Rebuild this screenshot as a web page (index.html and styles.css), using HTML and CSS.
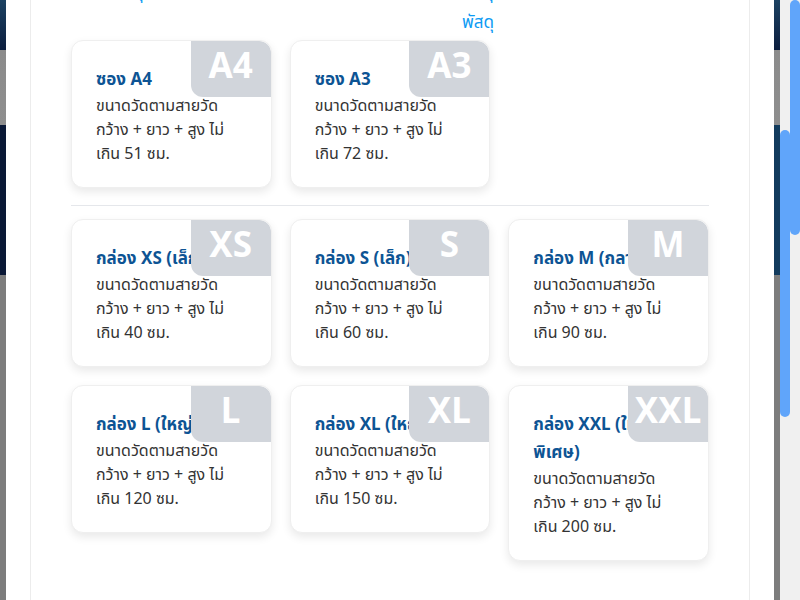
FILE: index.html
```html
<!DOCTYPE html>
<html lang="th">
<head>
<meta charset="utf-8">
<title>ขนาดกล่องพัสดุ</title>
<link rel="stylesheet" href="styles.css">
</head>
<body>
<div class="screen">
  <div class="overlay">
    <div class="modal">
      <div class="sheet">
        <p class="intro"><span class="intro-line">กรุณาเลือกขนาดซองหรือกล่องให้ตรงกับขนาดที่ใช้บรรจุ</span><span class="intro-line">พัสดุ</span></p>

        <div class="grid">
          <div class="card">
            <div class="badge">A4</div>
            <h3 class="card-title">ซอง A4</h3>
            <p class="card-desc">ขนาดวัดตามสายวัด กว้าง + ยาว + สูง ไม่เกิน 51 ซม.</p>
          </div>
          <div class="card">
            <div class="badge">A3</div>
            <h3 class="card-title">ซอง A3</h3>
            <p class="card-desc">ขนาดวัดตามสายวัด กว้าง + ยาว + สูง ไม่เกิน 72 ซม.</p>
          </div>
        </div>

        <hr class="divider">

        <div class="grid">
          <div class="card">
            <div class="badge">XS</div>
            <h3 class="card-title">กล่อง XS (เล็กพิเศษ)</h3>
            <p class="card-desc">ขนาดวัดตามสายวัด กว้าง + ยาว + สูง ไม่เกิน 40 ซม.</p>
          </div>
          <div class="card">
            <div class="badge">S</div>
            <h3 class="card-title">กล่อง S (เล็ก)</h3>
            <p class="card-desc">ขนาดวัดตามสายวัด กว้าง + ยาว + สูง ไม่เกิน 60 ซม.</p>
          </div>
          <div class="card">
            <div class="badge">M</div>
            <h3 class="card-title">กล่อง M (กลาง)</h3>
            <p class="card-desc">ขนาดวัดตามสายวัด กว้าง + ยาว + สูง ไม่เกิน 90 ซม.</p>
          </div>
          <div class="card">
            <div class="badge">L</div>
            <h3 class="card-title">กล่อง L (ใหญ่)</h3>
            <p class="card-desc">ขนาดวัดตามสายวัด กว้าง + ยาว + สูง ไม่เกิน 120 ซม.</p>
          </div>
          <div class="card">
            <div class="badge">XL</div>
            <h3 class="card-title">กล่อง XL (ใหญ่)</h3>
            <p class="card-desc">ขนาดวัดตามสายวัด กว้าง + ยาว + สูง ไม่เกิน 150 ซม.</p>
          </div>
          <div class="card">
            <div class="badge">XXL</div>
            <h3 class="card-title">กล่อง XXL (ใหญ่พิเศษ)</h3>
            <p class="card-desc">ขนาดวัดตามสายวัด กว้าง + ยาว + สูง ไม่เกิน 200 ซม.</p>
          </div>
        </div>
      </div>
    </div>
  </div>
  <div class="scroll"><div class="thumb thumb-inner"></div></div>
  <div class="scroll"><div class="thumb thumb-page"></div></div>
</div>
</body>
</html>
```

FILE: styles.css
```css
html, body {
  margin: 0;
  padding: 0;
}

body {
  font-family: "Noto Sans", "Noto Sans Thai", sans-serif;
  color: #333;
}

.screen {
  display: flex;
  height: 600px;
  overflow: hidden;
}

.overlay {
  flex: 0 0 780px;
  display: flex;
  justify-content: center;
  background:
    linear-gradient(#1c4262, #0c1e3e) 0 0 / 100% 50px no-repeat,
    linear-gradient(#8b8b8b, #8e8e8e) 0 50px / 100% 75px no-repeat,
    linear-gradient(90deg, #0a1836, #123b5d) 0 125px / 100% 150px no-repeat,
    #7d7d7d;
}

.modal {
  width: 768px;
  background: #fff;
  display: flex;
  justify-content: center;
}

.sheet {
  width: 720px;
  box-sizing: border-box;
  border-left: 1px solid #ececec;
  border-right: 1px solid #ececec;
  padding: 0 40px;
  background: #fff;
}

.intro {
  margin: -23px 0 0;
  width: 423px;
  text-align: right;
  font-size: 17px;
  line-height: 30px;
  color: #0c9bf4;
}

.intro-line {
  display: block;
  white-space: nowrap;
}

.grid {
  display: grid;
  grid-template-columns: repeat(3, 1fr);
  gap: 18px;
  align-items: start;
}

.intro + .grid {
  margin-top: 3px;
}

.card {
  position: relative;
  overflow: hidden;
  background: #fff;
  border: 1px solid #efefef;
  border-radius: 12px;
  box-shadow: 0 4px 10px rgba(0, 0, 0, 0.09);
  padding: 24px 24px 22px;
}

.badge {
  position: absolute;
  top: 0;
  right: 0;
  width: 80px;
  height: 56px;
  box-sizing: border-box;
  padding-bottom: 9px;
  display: flex;
  align-items: center;
  justify-content: center;
  background: #d1d5db;
  color: #fff;
  font-size: 35px;
  font-weight: 700;
  border-radius: 0 12px 0 12px;
}

.card-title {
  margin: 0;
  font-size: 17px;
  line-height: 28px;
  font-weight: 700;
  color: #0d5494;
}

.card-desc {
  margin: 0;
  font-size: 16px;
  line-height: 24px;
  color: #333;
}

.divider {
  margin: 17px 0 13px;
  border: 0;
  border-top: 1px solid #e5e7eb;
  height: 0;
}

.scroll {
  flex: 0 0 10px;
  background: #f0f0f0;
}

.thumb {
  width: 10px;
  border-radius: 5px;
  background: #60a5fa;
}

.thumb-inner {
  margin-top: 130px;
  height: 287px;
}

.thumb-page {
  height: 235px;
}
```
